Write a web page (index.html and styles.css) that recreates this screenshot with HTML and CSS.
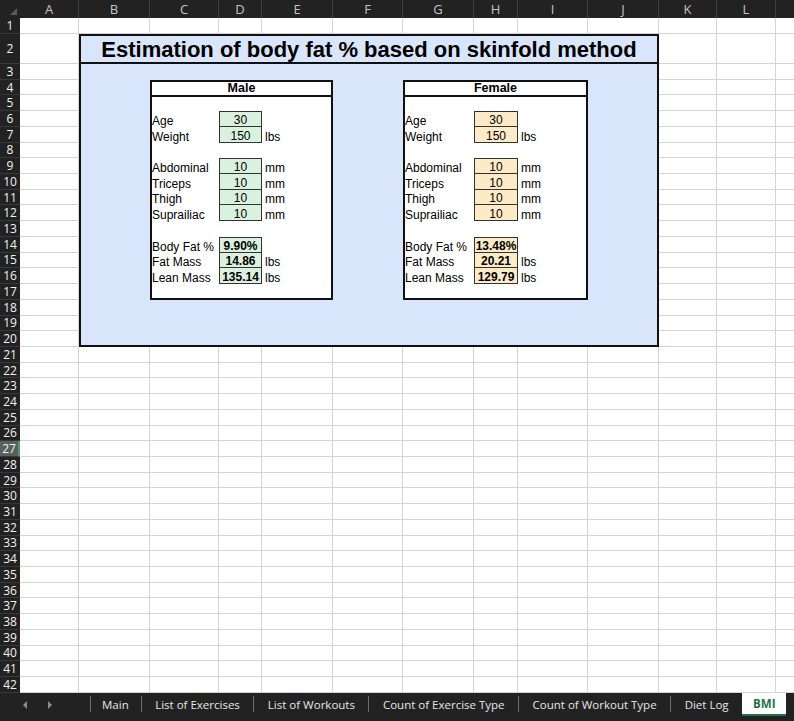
FILE: index.html
```html
<!DOCTYPE html>
<html>
<head>
<meta charset="utf-8">
<title>BMI</title>
<link rel="stylesheet" href="styles.css">
</head>
<body>
<div class="app">
  <div class="colbar">
    <div class="corner"></div>
    <div class="ch">A</div><div class="ch">B</div><div class="ch">C</div><div class="ch">D</div><div class="ch">E</div><div class="ch">F</div><div class="ch">G</div><div class="ch">H</div><div class="ch">I</div><div class="ch">J</div><div class="ch">K</div><div class="ch">L</div><div class="ch"></div>
  </div>
  <div class="main">
    <div class="rowbar">
      <div class="rh">1</div><div class="rh">2</div><div class="rh">3</div><div class="rh">4</div><div class="rh">5</div><div class="rh">6</div><div class="rh">7</div><div class="rh">8</div><div class="rh">9</div><div class="rh">10</div><div class="rh">11</div><div class="rh">12</div><div class="rh">13</div><div class="rh">14</div><div class="rh">15</div><div class="rh">16</div><div class="rh">17</div><div class="rh">18</div><div class="rh">19</div><div class="rh">20</div><div class="rh">21</div><div class="rh">22</div><div class="rh">23</div><div class="rh">24</div><div class="rh">25</div><div class="rh">26</div><div class="rh sel">27</div><div class="rh">28</div><div class="rh">29</div><div class="rh">30</div><div class="rh">31</div><div class="rh">32</div><div class="rh">33</div><div class="rh">34</div><div class="rh">35</div><div class="rh">36</div><div class="rh">37</div><div class="rh">38</div><div class="rh">39</div><div class="rh">40</div><div class="rh">41</div><div class="rh">42</div>
    </div>
    <div class="canvas">
      <div class="vlines">
        <div></div><div></div><div></div><div></div><div></div><div></div><div></div><div></div><div></div><div></div><div></div><div></div><div></div>
      </div>
      <div class="hlines">
        <div></div><div></div><div></div><div></div><div></div><div></div><div></div><div></div><div></div><div></div><div></div><div></div><div></div><div></div><div></div><div></div><div></div><div></div><div></div><div></div><div></div><div></div><div></div><div></div><div></div><div></div><div></div><div></div><div></div><div></div><div></div><div></div><div></div><div></div><div></div><div></div><div></div><div></div><div></div><div></div><div></div><div></div>
      </div>
      <div class="content">
        <div class="panel">
          <div class="title">Estimation of body fat % based on skinfold method</div>
          <div class="calc male">
            <div class="calc-head">Male</div>
            <div class="blank"></div>
            <div class="lbl">Age</div><div class="val first">30</div><div class="unit"></div>
            <div class="lbl">Weight</div><div class="val">150</div><div class="unit">lbs</div>
            <div class="blank"></div>
            <div class="lbl">Abdominal</div><div class="val first">10</div><div class="unit">mm</div>
            <div class="lbl">Triceps</div><div class="val">10</div><div class="unit">mm</div>
            <div class="lbl">Thigh</div><div class="val">10</div><div class="unit">mm</div>
            <div class="lbl">Suprailiac</div><div class="val">10</div><div class="unit">mm</div>
            <div class="blank"></div>
            <div class="lbl">Body Fat %</div><div class="val first res">9.90%</div><div class="unit"></div>
            <div class="lbl">Fat Mass</div><div class="val res">14.86</div><div class="unit">lbs</div>
            <div class="lbl">Lean Mass</div><div class="val res">135.14</div><div class="unit">lbs</div>
          </div>
          <div class="calc female">
            <div class="calc-head">Female</div>
            <div class="blank"></div>
            <div class="lbl">Age</div><div class="val first">30</div><div class="unit"></div>
            <div class="lbl">Weight</div><div class="val">150</div><div class="unit">lbs</div>
            <div class="blank"></div>
            <div class="lbl">Abdominal</div><div class="val first">10</div><div class="unit">mm</div>
            <div class="lbl">Triceps</div><div class="val">10</div><div class="unit">mm</div>
            <div class="lbl">Thigh</div><div class="val">10</div><div class="unit">mm</div>
            <div class="lbl">Suprailiac</div><div class="val">10</div><div class="unit">mm</div>
            <div class="blank"></div>
            <div class="lbl">Body Fat %</div><div class="val first res">13.48%</div><div class="unit"></div>
            <div class="lbl">Fat Mass</div><div class="val res">20.21</div><div class="unit">lbs</div>
            <div class="lbl">Lean Mass</div><div class="val res">129.79</div><div class="unit">lbs</div>
          </div>
        </div>
      </div>
    </div>
  </div>
  <div class="tabbar">
    <div class="navs"><span class="arrow left"></span><span class="arrow right"></span></div>
    <span class="sep"></span>
    <span class="tab first">Main</span>
    <span class="sep"></span>
    <span class="tab">List of Exercises</span>
    <span class="sep"></span>
    <span class="tab">List of Workouts</span>
    <span class="sep"></span>
    <span class="tab">Count of Exercise Type</span>
    <span class="sep"></span>
    <span class="tab">Count of Workout Type</span>
    <span class="sep"></span>
    <span class="tab">Diet Log</span>
    <span class="tab active">BMI</span>
  </div>
</div>
</body>
</html>
```
FILE: styles.css
```css
:root {
  --cols: 59px 71px 69px 43px 71px 70px 71px 44px 70px 71px 58px 59px 60px;
  --rows: 16px 30px repeat(40, 15.725px);
  --grid: #d4d4d4;
  --dark: #222222;
}
* { box-sizing: border-box; margin: 0; padding: 0; }
html, body { width: 794px; height: 721px; overflow: hidden; background: #fff; }
body { font-family: "Liberation Sans", Arial, sans-serif; color: #000; }

.app { display: flex; flex-direction: column; width: 794px; height: 721px; }

/* column headers */
.colbar {
  flex: none; height: 18px; display: grid;
  grid-template-columns: 20px var(--cols);
  background: var(--dark);
  overflow: hidden;
}
.corner {
  display: flex; justify-content: flex-end; align-items: flex-end;
  padding: 0 3px 3px 0;
}
.corner::after {
  content: ""; width: 0; height: 0;
  border-left: 7px solid transparent;
  border-bottom: 7px solid #5c5c5c;
}
.ch {
  display: flex; align-items: center; justify-content: center;
  color: #c4c4c4; font: 13px "Open Sans", sans-serif;
  border-right: 1px solid #3e3e3e;
}

/* main area */
.main { flex: none; height: 675px; display: flex; overflow: hidden; }
.rowbar {
  flex: none; width: 20px; display: grid;
  grid-template-rows: var(--rows);
  background: var(--dark);
}
.rh {
  display: flex; align-items: center; justify-content: center;
  color: #f2f2f2; font: 12px "Open Sans", sans-serif;
  border-bottom: 1px solid #383838;
}
.rh.sel { background: #58625c; border-right: 2px solid #4c9a6c; }

.canvas { flex: 1; display: grid; grid-template: 1fr / 1fr; overflow: hidden; }
.canvas > * { grid-area: 1 / 1; }

.vlines { display: grid; grid-template-columns: var(--cols); grid-template-rows: 1fr; }
.vlines > div { border-right: 1px solid var(--grid); }
.hlines { display: grid; grid-template-rows: var(--rows); }
.hlines > div { border-bottom: 1px solid var(--grid); }

.content { display: grid; grid-template-columns: var(--cols); grid-template-rows: var(--rows); }

/* panel */
.panel {
  grid-column: 2 / 11; grid-row: 2 / 21;
  display: grid; grid-template-columns: subgrid; grid-template-rows: subgrid;
  background: #d9e5fb; border: 2px solid #111;
}
.title {
  grid-column: 1 / -1; grid-row: 1;
  display: flex; align-items: flex-end; justify-content: center;
  font-size: 22px; font-weight: bold; line-height: 22px;
  padding-bottom: 1px;
  border-bottom: 2px solid #111;
}

.calc {
  grid-row: 3 / 17;
  display: grid; grid-template-columns: subgrid; grid-template-rows: subgrid;
  background: #fff; border: 2px solid #111;
  font-size: 12px; line-height: 12px;
}
.male { grid-column: 2 / 5; }
.female { grid-column: 6 / 9; }

.calc-head {
  grid-column: 1 / -1;
  display: flex; align-items: flex-end; justify-content: center;
  font-weight: bold; font-size: 12.5px; line-height: 12px;
  padding-bottom: 1px;
  margin-bottom: -2px;
  border-bottom: 2px solid #111;
}
.blank { grid-column: 1 / -1; }
.lbl, .unit, .val { display: flex; align-items: flex-end; white-space: nowrap; }
.unit { padding-left: 3px; }
.val {
  justify-content: center;
  border: 1px solid #333; border-top: 0;
}
.val.first { border-top: 1px solid #333; }
.val.res { font-weight: bold; }
.male .val { background: #d9f1de; }
.female .val { background: #fdeac6; }

/* tabs */
.tabbar {
  flex: 1; background: var(--dark);
  display: flex; align-items: flex-start;
  font: 11.5px "Open Sans", sans-serif; color: #e6e6e6;
}
.navs {
  width: 90px; height: 23px; display: flex; align-items: center;
  gap: 21px; padding-left: 23px;
}
.arrow { width: 0; height: 0; border-top: 4px solid transparent; border-bottom: 4px solid transparent; }
.arrow.left { border-right: 4px solid #8c8c8c; }
.arrow.right { border-left: 4px solid #8c8c8c; }
.sep { width: 1px; height: 16px; margin-top: 3px; background: #6c6c6c; }
.tab { height: 23px; display: flex; align-items: center; padding: 0 13.5px; white-space: nowrap; }
.tab.first { padding: 0 12px 0 11px; }
.tab.active {
  background: #fff; color: #217346; font-weight: bold;
  padding: 0 11px; border-bottom: 2px solid #217346;
}
```
